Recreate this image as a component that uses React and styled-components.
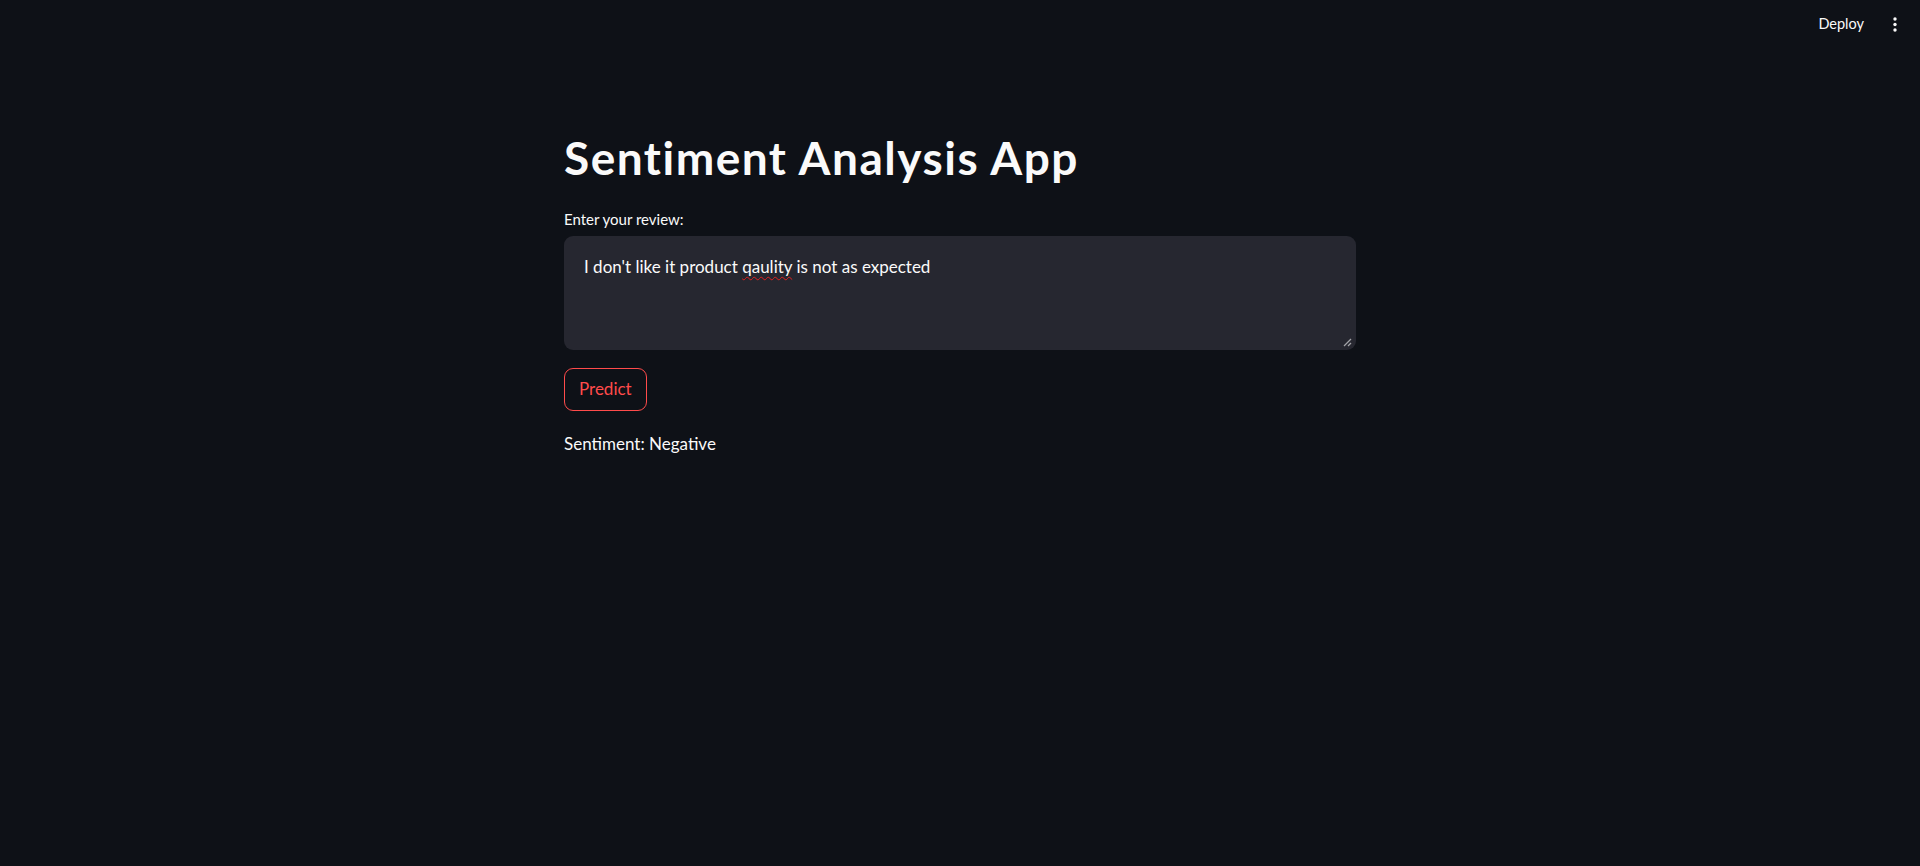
import React from "react";
import styled, { createGlobalStyle } from "styled-components";

const Global = createGlobalStyle`
  html, body {
    margin: 0;
    padding: 0;
    background: #0e1117;
    min-height: 100%;
  }
  body {
    font-family: Lato, "Noto Sans", sans-serif;
    color: #fafafa;
    min-height: 866px;
  }
`;

const Page = styled.div`
  min-height: 866px;
  background: #0e1117;
  display: flex;
  flex-direction: column;
`;

const Header = styled.header`
  height: 48px;
  display: flex;
  justify-content: flex-end;
  align-items: center;
  gap: 26px;
  padding: 0 20px 0 0;
`;

const DeployButton = styled.button`
  background: transparent;
  border: none;
  color: #fafafa;
  font-family: Lato, sans-serif;
  font-size: 14.5px;
  line-height: 18px;
  padding: 0;
  cursor: pointer;
`;

const MenuButton = styled.button`
  background: transparent;
  border: none;
  padding: 0;
  width: 10px;
  height: 16px;
  display: flex;
  align-items: center;
  justify-content: center;
  color: #fafafa;
  cursor: pointer;
`;

const Main = styled.main`
  width: 792px;
  margin: 0 auto;
  padding-top: 82px;
  display: flex;
  flex-direction: column;
  align-items: flex-start;
`;

const Title = styled.h1`
  margin: 0 0 25px 0;
  font-family: Lato, sans-serif;
  font-weight: 700;
  font-size: 46px;
  line-height: 1.2;
  color: #fafafa;
  letter-spacing: 1.5px;
`;

const Label = styled.label`
  font-size: 15px;
  line-height: 1.2;
  color: #fafafa;
  margin-bottom: 8px;
`;

const TextBox = styled.div`
  position: relative;
  box-sizing: border-box;
  width: 100%;
  height: 114px;
  background: #262730;
  border: 1px solid transparent;
  border-radius: 9px;
  padding: 18px 19px;
  font-size: 17px;
  line-height: 1.4;
  color: #fafafa;
  margin-bottom: 18px;
`;

const Misspelled = styled.span`
  text-decoration: underline wavy #e0201f;
  text-decoration-thickness: 1px;
  text-underline-offset: 3px;
`;

const Grip = styled.svg`
  position: absolute;
  right: 3px;
  bottom: 2px;
`;

const PrimaryButton = styled.button`
  box-sizing: border-box;
  height: 43px;
  display: inline-flex;
  align-items: center;
  padding: 0 14px;
  border: 1px solid #ff4b4b;
  border-radius: 9px;
  background: #0e1117;
  color: #ff4b4b;
  font-family: Lato, sans-serif;
  font-size: 17px;
  line-height: 1.2;
  margin-bottom: 23px;
  cursor: pointer;
`;

const Result = styled.p`
  margin: 0;
  font-size: 17px;
  line-height: 1.2;
  color: #fafafa;
`;

export default function App() {
  return (
    <Page>
      <Global />
      <Header>
        <DeployButton>Deploy</DeployButton>
        <MenuButton aria-label="Main menu">
          <svg width="4" height="15" viewBox="0 0 4 15">
            <circle cx="2" cy="2" r="1.7" fill="#fafafa" />
            <circle cx="2" cy="7.5" r="1.7" fill="#fafafa" />
            <circle cx="2" cy="13" r="1.7" fill="#fafafa" />
          </svg>
        </MenuButton>
      </Header>
      <Main>
        <Title>Sentiment Analysis App</Title>
        <Label>Enter your review:</Label>
        <TextBox role="textbox" aria-multiline="true">
          I don't like it product <Misspelled>qaulity</Misspelled> is not as expected
          <Grip width="9" height="9" viewBox="0 0 9 9">
            <line x1="1" y1="8" x2="8" y2="1" stroke="#a3a3a8" strokeWidth="1.3" />
            <line x1="5" y1="8" x2="8" y2="5" stroke="#a3a3a8" strokeWidth="1.3" />
          </Grip>
        </TextBox>
        <PrimaryButton>Predict</PrimaryButton>
        <Result>Sentiment: Negative</Result>
      </Main>
    </Page>
  );
}
